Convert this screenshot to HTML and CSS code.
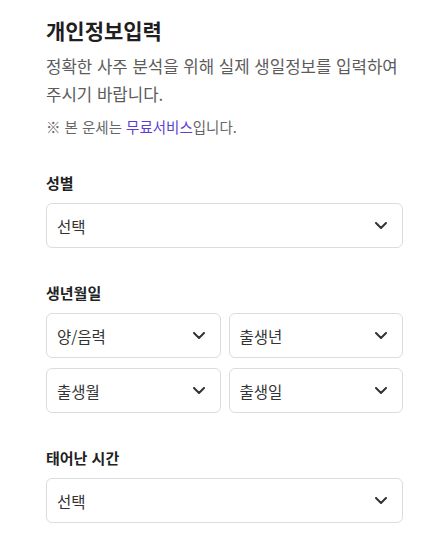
FILE: index.html
```html
<!DOCTYPE html>
<html lang="ko">
<head>
<meta charset="utf-8">
<title>개인정보입력</title>
<link rel="stylesheet" href="styles.css">
</head>
<body>
<main class="page">
  <h1 class="title">개인정보입력</h1>
  <p class="desc">정확한 사주 분석을 위해 실제 생일정보를 입력하여 주시기 바랍니다.</p>
  <p class="note">※ 본 운세는 <span class="free">무료서비스</span>입니다.</p>

  <section class="field">
    <div class="label">성별</div>
    <div class="select"><span>선택</span><svg class="chev" viewBox="0 0 12 7"><path d="M1 1l5 5 5-5"/></svg></div>
  </section>

  <section class="field">
    <div class="label">생년월일</div>
    <div class="grid">
      <div class="select"><span>양/음력</span><svg class="chev" viewBox="0 0 12 7"><path d="M1 1l5 5 5-5"/></svg></div>
      <div class="select"><span>출생년</span><svg class="chev" viewBox="0 0 12 7"><path d="M1 1l5 5 5-5"/></svg></div>
      <div class="select"><span>출생월</span><svg class="chev" viewBox="0 0 12 7"><path d="M1 1l5 5 5-5"/></svg></div>
      <div class="select"><span>출생일</span><svg class="chev" viewBox="0 0 12 7"><path d="M1 1l5 5 5-5"/></svg></div>
    </div>
  </section>

  <section class="field">
    <div class="label">태어난 시간</div>
    <div class="select"><span>선택</span><svg class="chev" viewBox="0 0 12 7"><path d="M1 1l5 5 5-5"/></svg></div>
  </section>
</main>
</body>
</html>
```

FILE: styles.css
```css
* { box-sizing: border-box; }
html, body { margin: 0; padding: 0; background: #fff; }
body {
  font-family: "Noto Sans CJK KR", "Noto Sans", sans-serif;
  color: #222;
}
.page {
  padding: 16px 43px 20px 46px;
}
.title {
  margin: 0;
  font-size: 21px;
  line-height: 28px;
  font-weight: 700;
  color: #1f1f1f;
}
.desc {
  margin: 8px 0 0;
  font-size: 16.75px;
  line-height: 28px;
  color: #5c5c5c;
}
.note {
  margin: 8px 0 0;
  font-size: 14.5px;
  line-height: 22px;
  color: #666;
}
.free { color: #5b3fd4; }
.field { margin-top: 34px; }
.label {
  font-size: 15px;
  line-height: 22px;
  font-weight: 700;
  color: #222;
  margin-bottom: 9px;
}
.select {
  height: 45px;
  border: 1px solid #dcdcdc;
  border-radius: 6px;
  padding: 0 15px 0 10px;
  display: flex;
  align-items: center;
  justify-content: space-between;
  font-size: 15.5px;
  color: #333;
}
.chev {
  width: 12px;
  height: 7px;
  fill: none;
  stroke: #333;
  stroke-width: 2;
  stroke-linecap: round;
  stroke-linejoin: round;
}
.grid {
  display: grid;
  grid-template-columns: 1fr 1fr;
  column-gap: 8px;
  row-gap: 10px;
}
```
